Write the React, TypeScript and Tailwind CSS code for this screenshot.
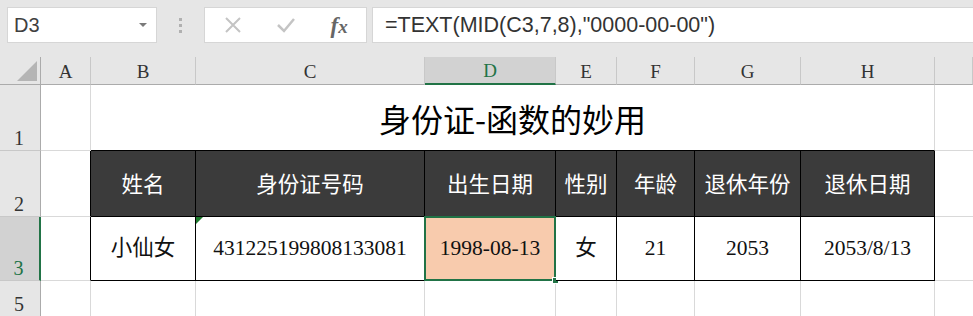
import React from "react";

const cols = ["A", "B", "C", "D", "E", "F", "G", "H", ""];

const serif = "font-['Liberation_Serif','Noto_Sans_CJK_SC',serif]";
const cjk = "font-['Noto_Sans_CJK_SC',sans-serif]";

function Toolbar() {
  return (
    <div className="flex h-[57px] items-start gap-0 pt-[7px] pl-[7px]">
      <div className="flex h-[36px] w-[150px] items-center justify-between border border-[#d6d6d6] bg-white pl-[6px] pr-[9px]">
        <span className="font-['Liberation_Sans',sans-serif] text-[20px] text-[#404040]">D3</span>
        <span className="h-0 w-0 border-x-[4px] border-t-[4px] border-x-transparent border-t-[#7a7a7a]" />
      </div>
      <div className="flex h-[36px] w-[47px] flex-col items-center justify-center gap-[3px]">
        <span className="h-[3px] w-[3px] bg-[#b0b0b0]" />
        <span className="h-[3px] w-[3px] bg-[#b0b0b0]" />
        <span className="h-[3px] w-[3px] bg-[#b0b0b0]" />
      </div>
      <div className="flex h-[36px] w-[163px] items-center border border-[#d6d6d6] bg-white">
        <div className="flex w-[54px] justify-center pl-[2px]">
          <svg width="18" height="18" viewBox="0 0 18 18">
            <path d="M2 2 L16 16 M16 2 L2 16" stroke="#c4c4c4" strokeWidth="2" fill="none" />
          </svg>
        </div>
        <div className="flex w-[54px] justify-center">
          <svg width="20" height="16" viewBox="0 0 20 16">
            <path d="M2 8 L8 14 L18 2" stroke="#c4c4c4" strokeWidth="2.5" fill="none" />
          </svg>
        </div>
        <div className="flex w-[54px] justify-center">
          <span className="font-['Liberation_Serif',serif] text-[23px] font-bold italic text-[#666] leading-none">
            f<span className="text-[19px]">x</span>
          </span>
        </div>
      </div>
      <div className="ml-[5px] flex h-[36px] flex-1 items-center border border-[#d6d6d6] border-r-0 bg-white pl-[12px]">
        <span className="font-['Liberation_Sans',sans-serif] text-[21.5px] text-[#333]">
          =TEXT(MID(C3,7,8),"0000-00-00")
        </span>
      </div>
    </div>
  );
}

function ColHeader({ label, active }: { label: string; active?: boolean }) {
  return (
    <div
      className={`flex items-end justify-center border-r border-[#c8c8c8] pb-[3px] leading-none ${serif} text-[19px] ${
        active ? "border-b-2 border-b-[#217346] bg-[#d2d2d2] text-[#217346]" : "border-b border-b-[#ababab] text-[#333]"
      }`}
    >
      {label}
    </div>
  );
}

function RowHeader({ n, active }: { n: string; active?: boolean }) {
  return (
    <div
      className={`flex items-end justify-center border-b border-[#c8c8c8] pb-[2px] pr-[2px] leading-none ${serif} text-[20px] ${
        active ? "border-r-2 border-r-[#217346] bg-[#d2d2d2] text-[#217346]" : "border-r border-r-[#ababab] bg-[#e6e6e6] text-[#333]"
      }`}
    >
      {n}
    </div>
  );
}

export default function App() {
  const heads = ["姓名", "身份证号码", "出生日期", "性别", "年龄", "退休年份", "退休日期"];
  const data = ["小仙女", "431225199808133081", "1998-08-13", "女", "21", "2053", "2053/8/13"];

  return (
    <div className="h-[316px] w-[973px] overflow-hidden bg-[#e6e6e6]">
      <Toolbar />
      <div className="grid grid-cols-[41px_50px_105px_229px_131px_61px_78px_106px_134px_1fr] grid-rows-[28px_66px_66px_64px_36px]">
        {/* column headers */}
        <div className="flex items-end justify-end border-r border-b border-[#ababab] pb-[3px] pr-[3px]">
          <svg width="20" height="20" viewBox="0 0 20 20">
            <path d="M20 0 L20 20 L0 20 Z" fill="#b5b5b5" />
          </svg>
        </div>
        {cols.map((c, i) => (
          <ColHeader key={i} label={c} active={c === "D"} />
        ))}

        {/* row 1 */}
        <RowHeader n="1" />
        <div className="border-r border-b border-r-[#d9d9d9] border-b-[#d9d9d9] bg-white" />
        <div className={`col-span-7 flex items-center justify-center border-r border-b border-r-[#d9d9d9] border-b-black bg-white ${cjk} text-[32px] text-black`}>
          身份证-函数的妙用
        </div>
        <div className="border-b border-[#d9d9d9] bg-white" />

        {/* row 2 */}
        <RowHeader n="2" />
        <div className="border-r border-b border-r-black border-b-[#d9d9d9] bg-white" />
        {heads.map((h, i) => (
          <div
            key={i}
            className={`flex items-center justify-center border-r border-b border-black bg-[#3b3b3b] ${cjk} text-[21.5px] text-white`}
          >
            {h}
          </div>
        ))}
        <div className="border-b border-[#d9d9d9] bg-white" />

        {/* row 3 */}
        <RowHeader n="3" active />
        <div className="border-r border-b border-r-black border-b-[#d9d9d9] bg-white" />
        {data.map((d, i) => (
          <div
            key={i}
            className={`relative flex items-center justify-center border-r border-b border-black ${
              i === 2 ? "bg-[#f8cbad]" : "bg-white"
            } ${serif} text-[21.5px] text-[#111]`}
          >
            {d}
            {i === 1 && (
              <span className="absolute left-0 top-0 h-0 w-0 border-r-[7px] border-t-[7px] border-r-transparent border-t-[#1e7b2e]" />
            )}
            {i === 2 && (
              <>
                <span className="absolute -left-[1px] -top-[1px] -right-[1px] -bottom-[1px] border-2 border-[#217346]" />
                <span className="absolute -bottom-[4px] -right-[4px] h-[7px] w-[7px] border border-white bg-[#217346]" />
              </>
            )}
          </div>
        ))}
        <div className="border-b border-[#d9d9d9] bg-white" />

        {/* row 5 (row 4 hidden) */}
        <RowHeader n="5" />
        {cols.map((_, i) => (
          <div key={i} className={`border-b border-[#d9d9d9] bg-white ${i < 8 ? "border-r" : ""}`} />
        ))}
      </div>
    </div>
  );
}
